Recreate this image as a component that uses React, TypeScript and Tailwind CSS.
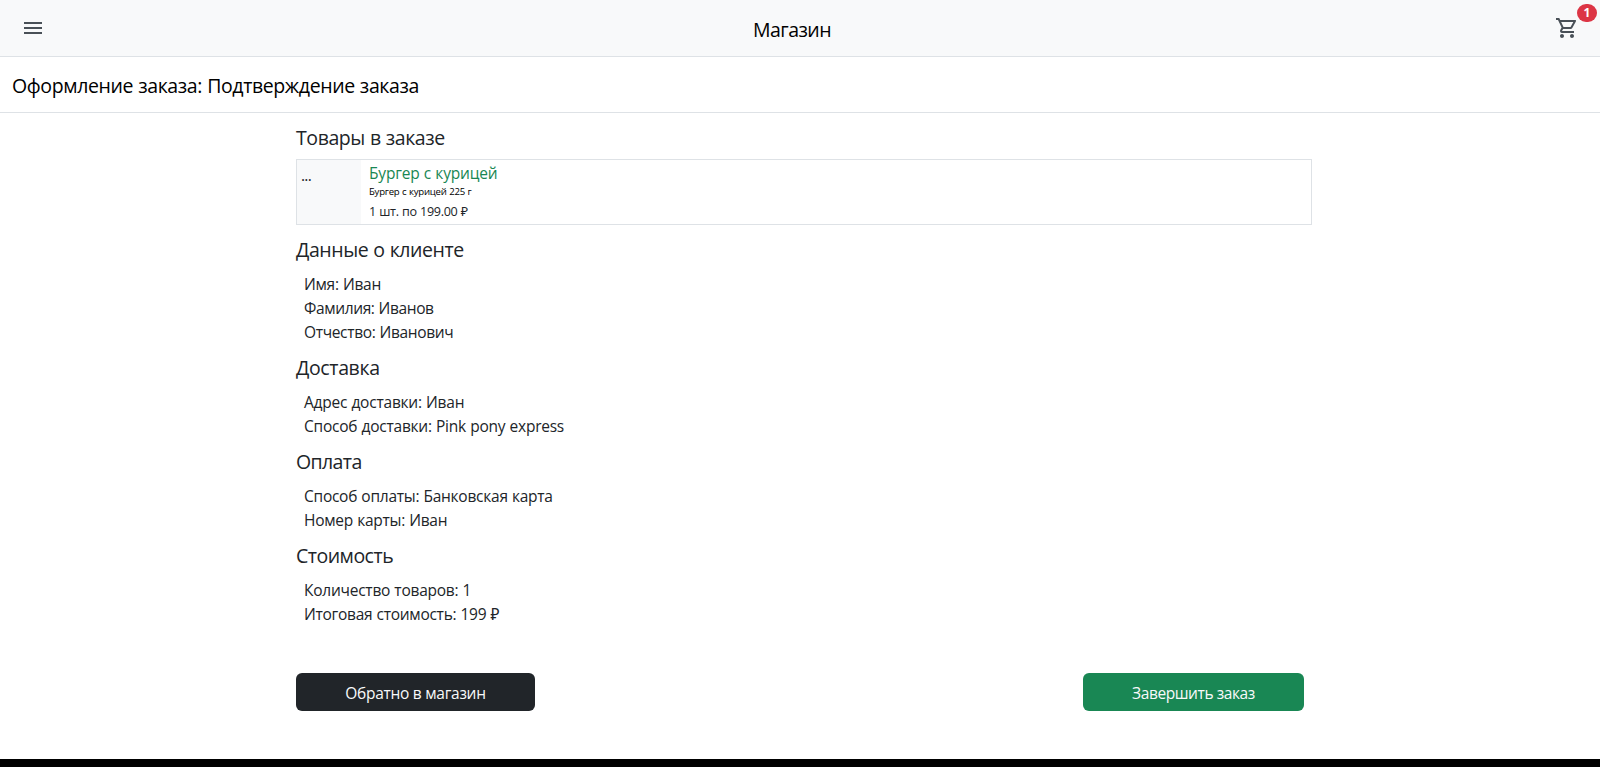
import { MdMenu, MdOutlineShoppingCart } from 'react-icons/md';

type Section = { title: string; titleClass: string; lines: { text: string; className: string }[] };

const sections: Section[] = [
  {
    title: 'Данные о клиенте',
    titleClass: 'tracking-[-0.42px]',
    lines: [
      { text: 'Имя: Иван', className: 'tracking-[-0.26px]' },
      { text: 'Фамилия: Иванов', className: 'tracking-[-0.38px]' },
      { text: 'Отчество: Иванович', className: 'tracking-[-0.34px]' },
    ],
  },
  {
    title: 'Доставка',
    titleClass: 'tracking-[-0.36px]',
    lines: [
      { text: 'Адрес доставки: Иван', className: 'tracking-[-0.22px]' },
      { text: 'Способ доставки: Pink pony express', className: 'tracking-[-0.23px]' },
    ],
  },
  {
    title: 'Оплата',
    titleClass: 'tracking-[-0.6px]',
    lines: [
      { text: 'Способ оплаты: Банковская карта', className: 'tracking-[-0.25px]' },
      { text: 'Номер карты: Иван', className: 'tracking-[-0.26px]' },
    ],
  },
  {
    title: 'Стоимость',
    titleClass: 'tracking-[-0.5px]',
    lines: [
      { text: 'Количество товаров: 1', className: 'tracking-[-0.24px]' },
      { text: 'Итоговая стоимость: 199 ₽', className: 'tracking-[-0.27px]' },
    ],
  },
];

export default function App() {
  return (
    <div className="flex h-[767px] flex-col overflow-hidden bg-white font-['Open_Sans','Noto_Sans',sans-serif] text-[15.5px] text-[#212529] [word-spacing:0.4px]">
      <header className="flex h-[57px] shrink-0 items-center justify-between border-b border-[#dee2e6] bg-[#f8f9fa] px-[21px] text-black">
        <MdMenu className="size-6 text-[#495057]" />
        <h1 className="mr-4 pt-1 text-[19.5px] leading-6 tracking-[-0.56px]">Магазин</h1>
        <div className="relative">
          <MdOutlineShoppingCart className="size-6 text-[#495057]" />
          <span className="absolute -top-3 left-[22px] flex h-[18px] w-5 items-center justify-center rounded-full bg-[#dc3545] text-xs font-bold text-white">
            1
          </span>
        </div>
      </header>
      <div className="flex h-14 shrink-0 items-center border-b border-[#dee2e6] pl-3 pt-[2px] text-[19.5px] leading-6 tracking-[-0.38px] text-black">
        <h2>Оформление заказа: Подтверждение заказа</h2>
      </div>
      <main className="ml-[296px] flex w-[1016px] grow flex-col pt-[13px]">
        <h3 className="text-[19.5px] leading-6 tracking-[-0.42px]">Товары в заказе</h3>
        <div className="mt-[9px] flex h-[66px] border border-[#dee2e6]">
          <div className="w-16 bg-[#f8f9fa] pl-1 pt-[3px] leading-6 tracking-[-0.7px]">...</div>
          <div className="flex flex-col pl-2 pt-px">
            <span className="leading-6 tracking-[-0.17px] text-[#198754]">Бургер с курицей</span>
            <span className="mt-px text-[9.6px] leading-3 tracking-[-0.25px] text-black">Бургер с курицей 225 г</span>
            <span className="mt-1 text-[12.6px] leading-5 tracking-[-0.33px]">1 шт. по 199.00 ₽</span>
          </div>
        </div>
        {sections.map((s) => (
          <section key={s.title} className="mt-3 first-of-type:mt-[13px]">
            <h3 className={`mb-[10px] text-[19.5px] leading-6 ${s.titleClass}`}>{s.title}</h3>
            <ul className="pl-2">
              {s.lines.map((l) => (
                <li key={l.text} className={`leading-6 ${l.className}`}>{l.text}</li>
              ))}
            </ul>
          </section>
        ))}
        <div className="mt-[47px] flex justify-between pr-2">
          <button className="h-[38px] w-[239px] rounded-md bg-[#212529] pt-1 tracking-[-0.28px] text-[#f8f9fa]">Обратно в магазин</button>
          <button className="h-[38px] w-[221px] rounded-md bg-[#198754] pt-1 tracking-[-0.42px] text-[#f8f9fa]">Завершить заказ</button>
        </div>
      </main>
      <div className="h-2 shrink-0 bg-black" />
    </div>
  );
}
